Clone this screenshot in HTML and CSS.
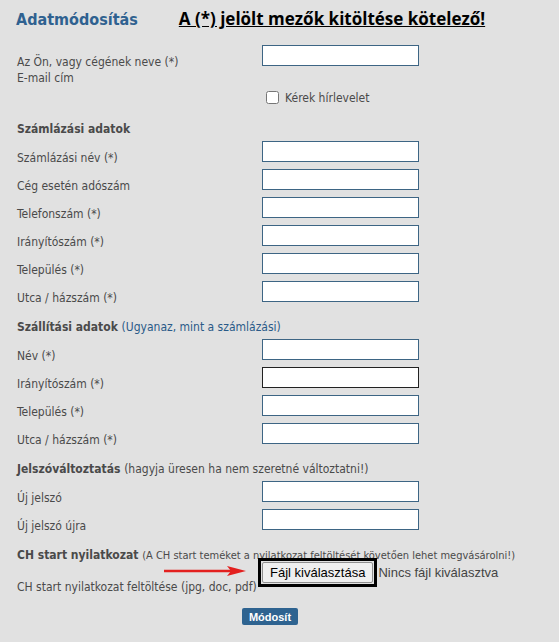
FILE: index.html
```html
<!DOCTYPE html>
<html>
<head>
<meta charset="utf-8">
<meta name="viewport" content="width=device-width, initial-scale=1">
<link rel="stylesheet" href="styles.css">
</head>
<body>

<form class="adatlap" onsubmit="return false;">

  <div class="fejlec">
    <h2>Adatmódosítás</h2>
    <span class="kotelezo">A (*) jelölt mezők kitöltése kötelező!</span>
  </div>

  <!-- alap adatok -->
  <div class="sor elso">
    <label>Az Ön, vagy cégének neve (*)<br>E-mail cím</label>
    <input type="text" name="nev">
  </div>
  <div class="sor hirlevel">
    <span></span>
    <label class="pipa"><input type="checkbox" name="hirlevel"> Kérek hírlevelet</label>
  </div>

  <div class="cim">Számlázási adatok</div>
  <div class="sor"><label>Számlázási név (*)</label><input type="text"></div>
  <div class="sor"><label>Cég esetén adószám</label><input type="text"></div>
  <div class="sor"><label>Telefonszám (*)</label><input type="text"></div>
  <div class="sor"><label>Irányítószám (*)</label><input type="text"></div>
  <div class="sor"><label>Település (*)</label><input type="text"></div>
  <div class="sor"><label>Utca / házszám (*)</label><input type="text"></div>

  <div class="cim">Szállítási adatok <a href="#">(Ugyanaz, mint a számlázási)</a></div>
  <div class="sor"><label>Név (*)</label><input type="text"></div>
  <div class="sor"><label>Irányítószám (*)</label><input type="text" class="aktiv"></div>
  <div class="sor"><label>Település (*)</label><input type="text"></div>
  <div class="sor"><label>Utca / házszám (*)</label><input type="text"></div>

  <div class="cim">Jelszóváltoztatás <span class="megj">(hagyja üresen ha nem szeretné változtatni!)</span></div>
  <div class="sor"><label>Új jelszó</label><input type="password"></div>
  <div class="sor"><label>Új jelszó újra</label><input type="password"></div>

  <div class="cim">CH start nyilatkozat <span class="megj kicsi">(A CH start teméket a nyilatkozat feltöltését követően lehet megvásárolni!)</span></div>
  <div class="sor fajlsor">
    <label>CH start nyilatkozat feltöltése (jpg, doc, pdf)</label>
    <div class="fajl">
      <span class="keret"><button type="button" class="fajlgomb">Fájl kiválasztása</button></span>
      <span class="nincs">Nincs fájl kiválasztva</span>
    </div>
    <!-- piros nyil a kepernyokepen -->
    <svg class="nyil" width="100" height="14" viewBox="0 0 100 14">
      <line x1="9" y1="7" x2="78" y2="7" stroke="#e3201f" stroke-width="2.5"/>
      <polygon points="72,2 91,7 72,12 76,7" fill="#e3201f"/>
    </svg>
  </div>

  <div class="gombsor">
    <button type="submit" class="modosit">Módosít</button>
  </div>
</form>

</body>
</html>
```

FILE: styles.css
```css
body {
  margin: 0;
  background: #e1e1e1;
  font-family: "DejaVu Sans Condensed", Tahoma, sans-serif;
  font-size: 12px;
  color: #4a4a4a;
}

.adatlap {
  width: 506px;
  padding: 7px 0 0 17px;
}

.fejlec {
  display: flex;
  align-items: baseline;
  gap: 41px;
  height: 27px;
}

.fejlec h2 {
  margin: 0 0 0 -1px;
  font-size: 16px;
  color: #2f6190;
}

.kotelezo {
  font-family: "Open Sans", sans-serif;
  font-weight: bold;
  font-size: 17px;
  color: #000;
  text-decoration: underline;
}

.sor {
  display: grid;
  grid-template-columns: 245px 157px;
  height: 28px;
  position: relative;
}

.sor label {
  padding-top: 9px;
  line-height: 16px;
}

.sor input[type=text], .sor input[type=password] {
  box-sizing: border-box;
  width: 157px;
  height: 21px;
  margin: 0;
  border: 1px solid #3d6584;
  background: #fff;
}

.sor input.aktiv {
  border-color: #222;
}

.elso {
  margin-top: 11px;
  height: 38px;
}

.elso label {
  padding-top: 9px;
}

.hirlevel {
  height: 29px;
}

.pipa {
  display: flex;
  align-items: center;
  gap: 6px;
  padding-top: 0 !important;
}

.pipa input {
  margin: 0 0 0 4px;
  width: 13px;
  height: 13px;
}

.cim {
  margin-top: 10px;
  margin-bottom: 4px;
  line-height: 16px;
  font-weight: bold;
}

.hirlevel + .cim {
  margin-top: 9px;
}

.cim a, .cim .megj {
  font-weight: normal;
}

.cim a {
  color: #2a5a88;
  text-decoration: none;
}

.megj.kicsi {
  font-size: 11px;
}

.fajlsor {
  height: 40px;
  margin-top: -10px;
}

.fajlsor label {
  padding-top: 21px;
}

.fajl {
  display: flex;
  align-items: center;
  white-space: nowrap;
  height: 28px;
  margin-left: -4px;
}

/* fekete jelolo keret a gomb korul */
.keret {
  display: flex;
  border: 3px solid #000;
  padding: 1px;
}

.fajlgomb {
  font-family: "Liberation Sans", Arial, sans-serif;
  font-size: 13px;
  padding: 2px 7px;
  margin: 0;
  height: 21px;
  color: #000;
  background: #efefef;
  border: 1px solid #8f8f8f;
  border-radius: 2px;
}

.nincs {
  font-family: "Liberation Sans", Arial, sans-serif;
  font-size: 13px;
  color: #444;
  margin-left: 1px;
}

.nyil {
  position: absolute;
  left: 138px;
  top: 6px;
}

.gombsor {
  display: flex;
  justify-content: center;
  margin-top: 10px;
}

.modosit {
  font-family: "Liberation Sans", Arial, sans-serif;
  font-weight: bold;
  font-size: 11px;
  color: #fff;
  background: #2e6390;
  border: none;
  border-radius: 2px;
  padding: 2px 7px;
  height: 17px;
}
```
